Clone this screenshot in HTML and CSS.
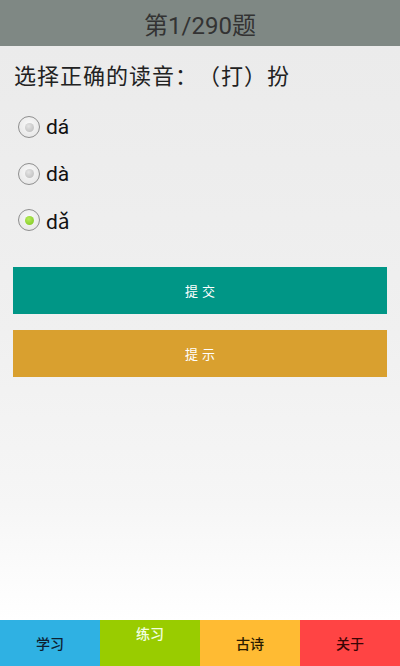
FILE: index.html
```html
<!DOCTYPE html>
<html lang="zh">
<head>
<meta charset="utf-8">
<link rel="stylesheet" href="styles.css">
</head>
<body>
<div class="app">
  <header class="topbar">第1/290题</header>
  <main class="content">
    <div class="question">选择正确的读音：（打）扮</div>
    <div class="options">
      <div class="option"><span class="radio"><span class="dot"></span></span><span class="label">dá</span></div>
      <div class="option"><span class="radio"><span class="dot"></span></span><span class="label">dà</span></div>
      <div class="option"><span class="radio checked"><span class="dot"></span></span><span class="label">dǎ</span></div>
    </div>
    <div class="btn submit">提 交</div>
    <div class="btn hint">提 示</div>
  </main>
  <nav class="tabs">
    <div class="tab t1">学习</div>
    <div class="tab t2">练习</div>
    <div class="tab t3">古诗</div>
    <div class="tab t4">关于</div>
  </nav>
</div>
</body>
</html>
```

FILE: styles.css
```css
* { box-sizing: border-box; }
html, body { margin: 0; padding: 0; }
body {
  width: 400px;
  height: 666px;
  font-family: Roboto, "Noto Sans CJK SC", sans-serif;
  overflow: hidden;
  text-spacing-trim: space-all;
}
.app {
  display: flex;
  flex-direction: column;
  height: 666px;
}
.topbar {
  height: 46px;
  background: #7f8884;
  color: #333;
  font-size: 24px;
  display: flex;
  align-items: center;
  justify-content: center;
}
.content {
  flex: 1;
  background: linear-gradient(#ebebeb, #f0f0f0 50%, #f6f6f6 80%, #ffffff);
  padding: 13px 13px 0 13px;
}
.question {
  font-family: "Noto Sans CJK SC", sans-serif;
  font-size: 22px;
  letter-spacing: 1px;
  color: #222;
  line-height: 30px;
  padding-left: 1px;
  text-spacing-trim: space-all;
}
.options {
  margin-top: 23px;
  display: flex;
  flex-direction: column;
  gap: 16.5px;
}
.option {
  display: flex;
  align-items: center;
  height: 30px;
  padding-left: 5px;
}
.radio {
  width: 22px;
  height: 22px;
  border-radius: 50%;
  border: 1.5px solid #8f8f8f;
  background: radial-gradient(circle at 50% 40%, #fafafa, #e2e2e2);
  display: flex;
  align-items: center;
  justify-content: center;
  margin-right: 6px;
}
.dot {
  width: 9px;
  height: 9px;
  border-radius: 50%;
  background: radial-gradient(circle at 40% 35%, #e4e4e4, #b8b8b8);
}
.radio.checked .dot {
  background: radial-gradient(circle at 40% 35%, #b6ec5a, #7ac41e);
}
.label {
  font-size: 21px;
  color: #111;
}
.btn {
  height: 47px;
  display: flex;
  align-items: center;
  justify-content: center;
  color: #fff;
  font-size: 13px;
  word-spacing: 1px;
}
.submit {
  margin-top: 32px;
  background: #009686;
}
.hint {
  margin-top: 16px;
  background: #d9a02f;
}
.tabs {
  height: 46px;
  display: grid;
  grid-template-columns: repeat(4, 1fr);
}
.tab {
  display: flex;
  align-items: center;
  justify-content: center;
  font-size: 14px;
  font-weight: 500;
}
.t1 { background: #2fb1e3; color: #0d2030; }
.t2 { background: #99cc00; color: #f2ffe0; align-items: flex-start; padding-top: 3px; }
.t3 { background: #ffbb33; color: #2a1a00; }
.t4 { background: #ff4444; color: #3a0505; }
```
